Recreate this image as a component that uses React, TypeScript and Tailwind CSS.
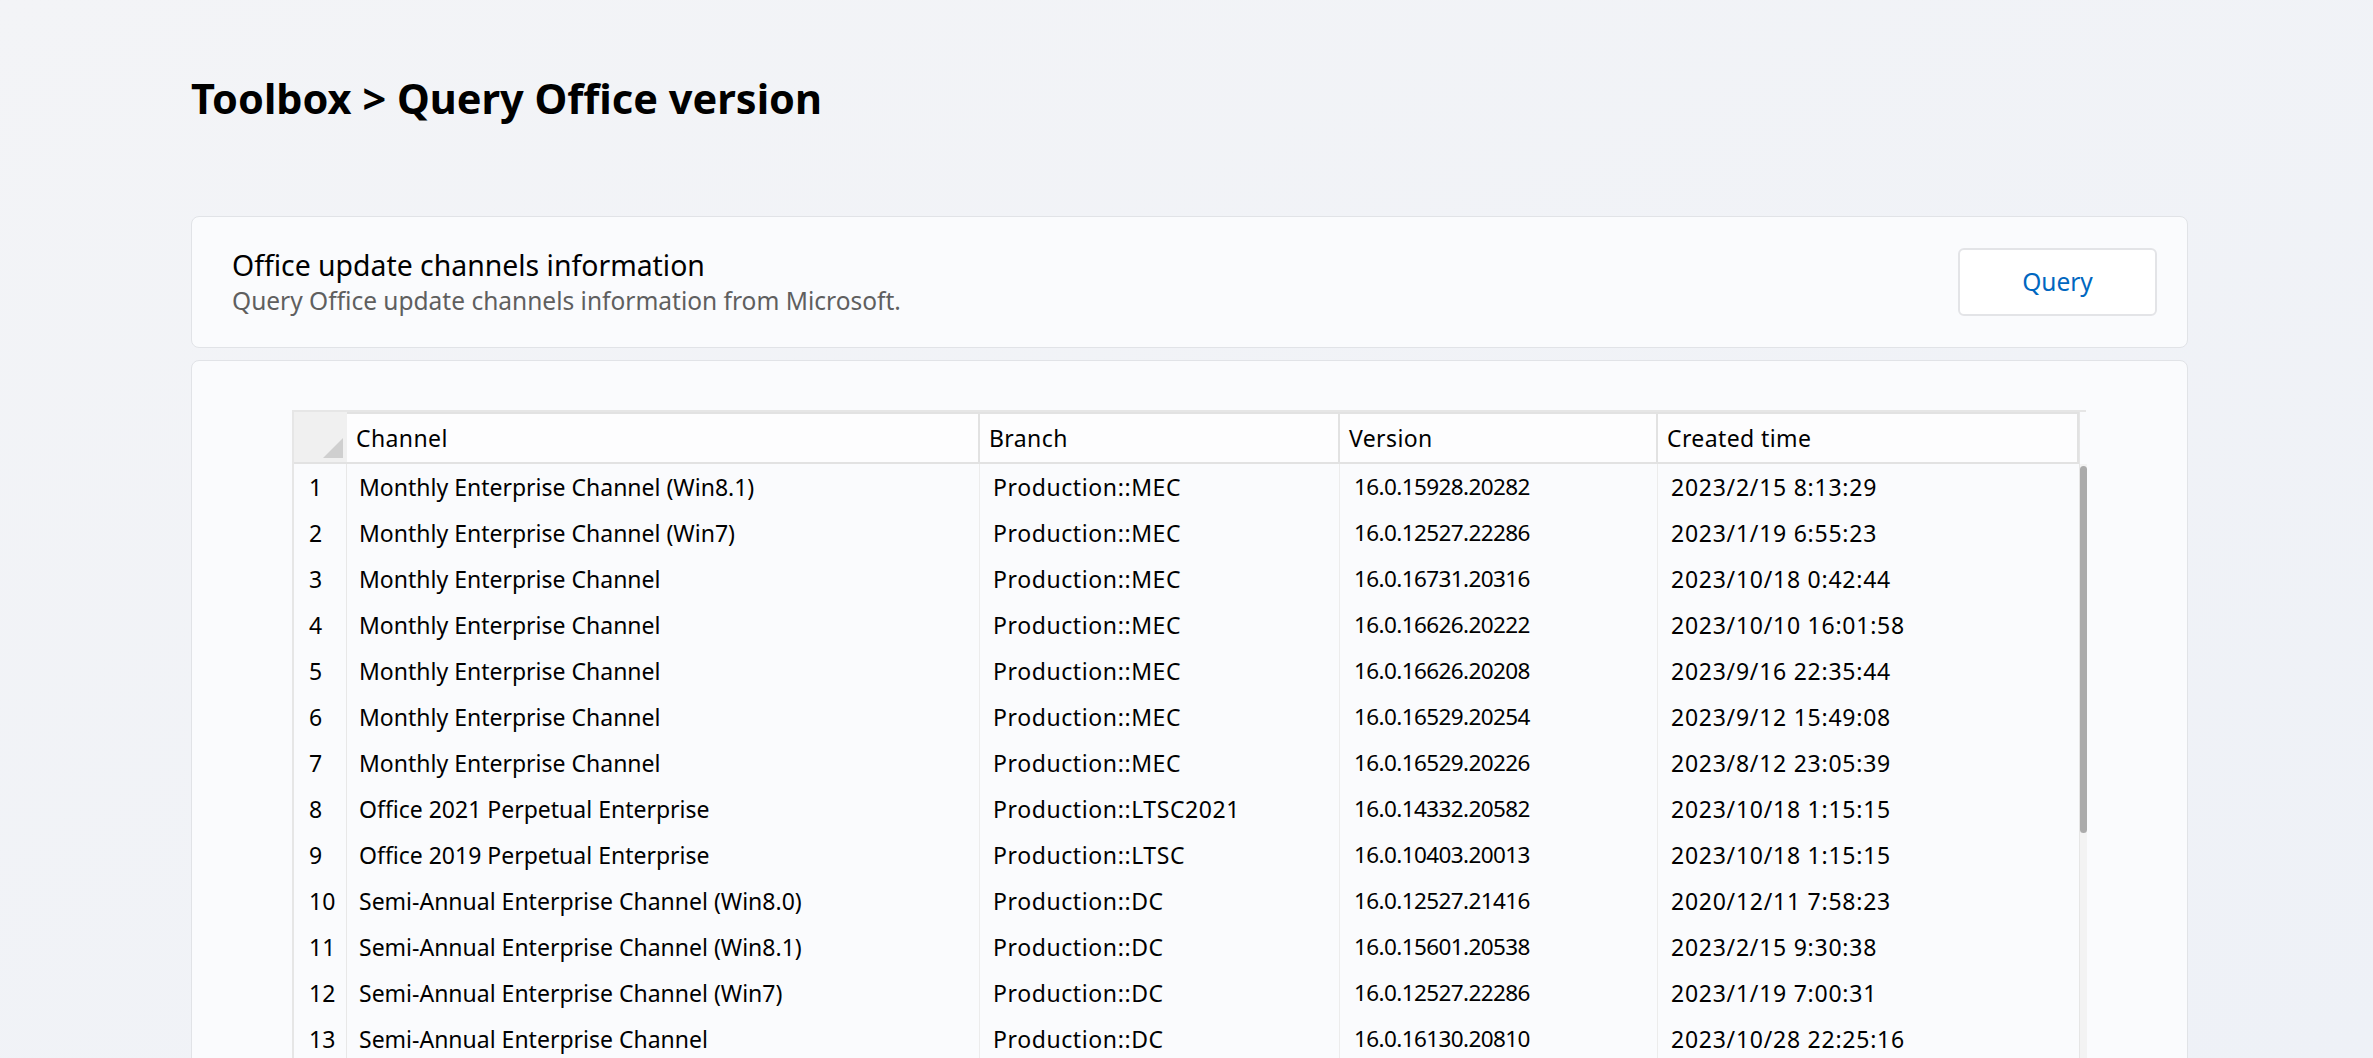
const rows = [
  ['Monthly Enterprise Channel (Win8.1)', 'Production::MEC', '16.0.15928.20282', '2023/2/15 8:13:29'],
  ['Monthly Enterprise Channel (Win7)', 'Production::MEC', '16.0.12527.22286', '2023/1/19 6:55:23'],
  ['Monthly Enterprise Channel', 'Production::MEC', '16.0.16731.20316', '2023/10/18 0:42:44'],
  ['Monthly Enterprise Channel', 'Production::MEC', '16.0.16626.20222', '2023/10/10 16:01:58'],
  ['Monthly Enterprise Channel', 'Production::MEC', '16.0.16626.20208', '2023/9/16 22:35:44'],
  ['Monthly Enterprise Channel', 'Production::MEC', '16.0.16529.20254', '2023/9/12 15:49:08'],
  ['Monthly Enterprise Channel', 'Production::MEC', '16.0.16529.20226', '2023/8/12 23:05:39'],
  ['Office 2021 Perpetual Enterprise', 'Production::LTSC2021', '16.0.14332.20582', '2023/10/18 1:15:15'],
  ['Office 2019 Perpetual Enterprise', 'Production::LTSC', '16.0.10403.20013', '2023/10/18 1:15:15'],
  ['Semi-Annual Enterprise Channel (Win8.0)', 'Production::DC', '16.0.12527.21416', '2020/12/11 7:58:23'],
  ['Semi-Annual Enterprise Channel (Win8.1)', 'Production::DC', '16.0.15601.20538', '2023/2/15 9:30:38'],
  ['Semi-Annual Enterprise Channel (Win7)', 'Production::DC', '16.0.12527.22286', '2023/1/19 7:00:31'],
  ['Semi-Annual Enterprise Channel', 'Production::DC', '16.0.16130.20810', '2023/10/28 22:25:16'],
];

const cols = 'grid grid-cols-[53px_633px_360px_318px_421px]';

function HeaderCell({ label }: { label: string }) {
  return (
    <div className="h-full border-2 border-l-0 border-[#e2e2e2] bg-[#fdfdfe] flex items-center pl-[9px] text-[23px] tracking-[0.4px]">
      {label}
    </div>
  );
}

export default function App() {
  return (
    <div
      className="h-[1058px] overflow-hidden bg-gradient-to-br from-[#f3f4f7] to-[#eef1f7] text-black"
      style={{ fontFamily: '"Noto Sans", "Open Sans", sans-serif' }}
    >
      <div className="pl-[191px] pr-[185px]">
        <h1 className="pt-[68px] h-[216px] text-[41.5px] leading-[60px] font-bold">
          Toolbox &gt; Query Office version
        </h1>

        {/* header card */}
        <div className="h-[132px] rounded-[8px] border border-[#e1e3e7] bg-[#fafbfd] flex items-center justify-between pl-[40px] pr-[30px]">
          <div className="flex flex-col">
            <span className="text-[28.4px] leading-[37px]">Office update channels information</span>
            <span className="text-[24.5px] leading-[33px] text-[#5f5f5f]">Query Office update channels information from Microsoft.</span>
          </div>
          <button className="w-[199px] h-[68px] rounded-[6px] border-2 border-[#e3e4e7] bg-white text-[#0067c0] text-[24.5px]">
            Query
          </button>
        </div>

        {/* table card */}
        <div className="mt-[12px] h-[900px] rounded-[8px] border border-[#e1e3e7] bg-[#fafbfd] pl-[100px] pr-[101px] pt-[49px]">
          <div className="flex border-t-2 border-l-2 border-[#e6e6e6]">
            <div className="flex-1">
              <div className={`${cols} h-[52px]`}>
                <div className="h-full bg-[#f0f0f0] border-b-2 border-[#e2e2e2] relative">
                  <svg className="absolute right-[4px] bottom-[4px]" width="20" height="20" viewBox="0 0 20 20">
                    <polygon points="20,0 20,20 0,20" fill="#cfcfcf" />
                  </svg>
                </div>
                <HeaderCell label="Channel" />
                <HeaderCell label="Branch" />
                <HeaderCell label="Version" />
                <HeaderCell label="Created time" />
              </div>
              {rows.map((r, i) => (
                <div key={i} className={`${cols} h-[46px] items-stretch text-[23px]`}>
                  <div className="flex items-center pl-[15px] border-r border-[#e8e8e8]">{i + 1}</div>
                  <div className="flex items-center pl-[12px] border-r border-[#ececec]">{r[0]}</div>
                  <div className="flex items-center pl-[13px] border-r border-[#ececec] tracking-[0.6px]">{r[1]}</div>
                  <div className="flex items-center pl-[14px] border-r border-[#ececec] text-[22.5px] tracking-[-0.6px]">{r[2]}</div>
                  <div className="flex items-center pl-[13px] tracking-[0.75px]">{r[3]}</div>
                </div>
              ))}
            </div>
            {/* vertical scrollbar */}
            <div className="w-[10px] flex flex-col border-l border-[#e6e6e6] bg-[#f3f3f3]">
              <div className="h-[52px] bg-[#fafbfd]" />
              <div className="mt-[2px] mx-auto w-[7px] h-[367px] rounded-full bg-[#ababab]" />
            </div>
          </div>
        </div>
      </div>
    </div>
  );
}
